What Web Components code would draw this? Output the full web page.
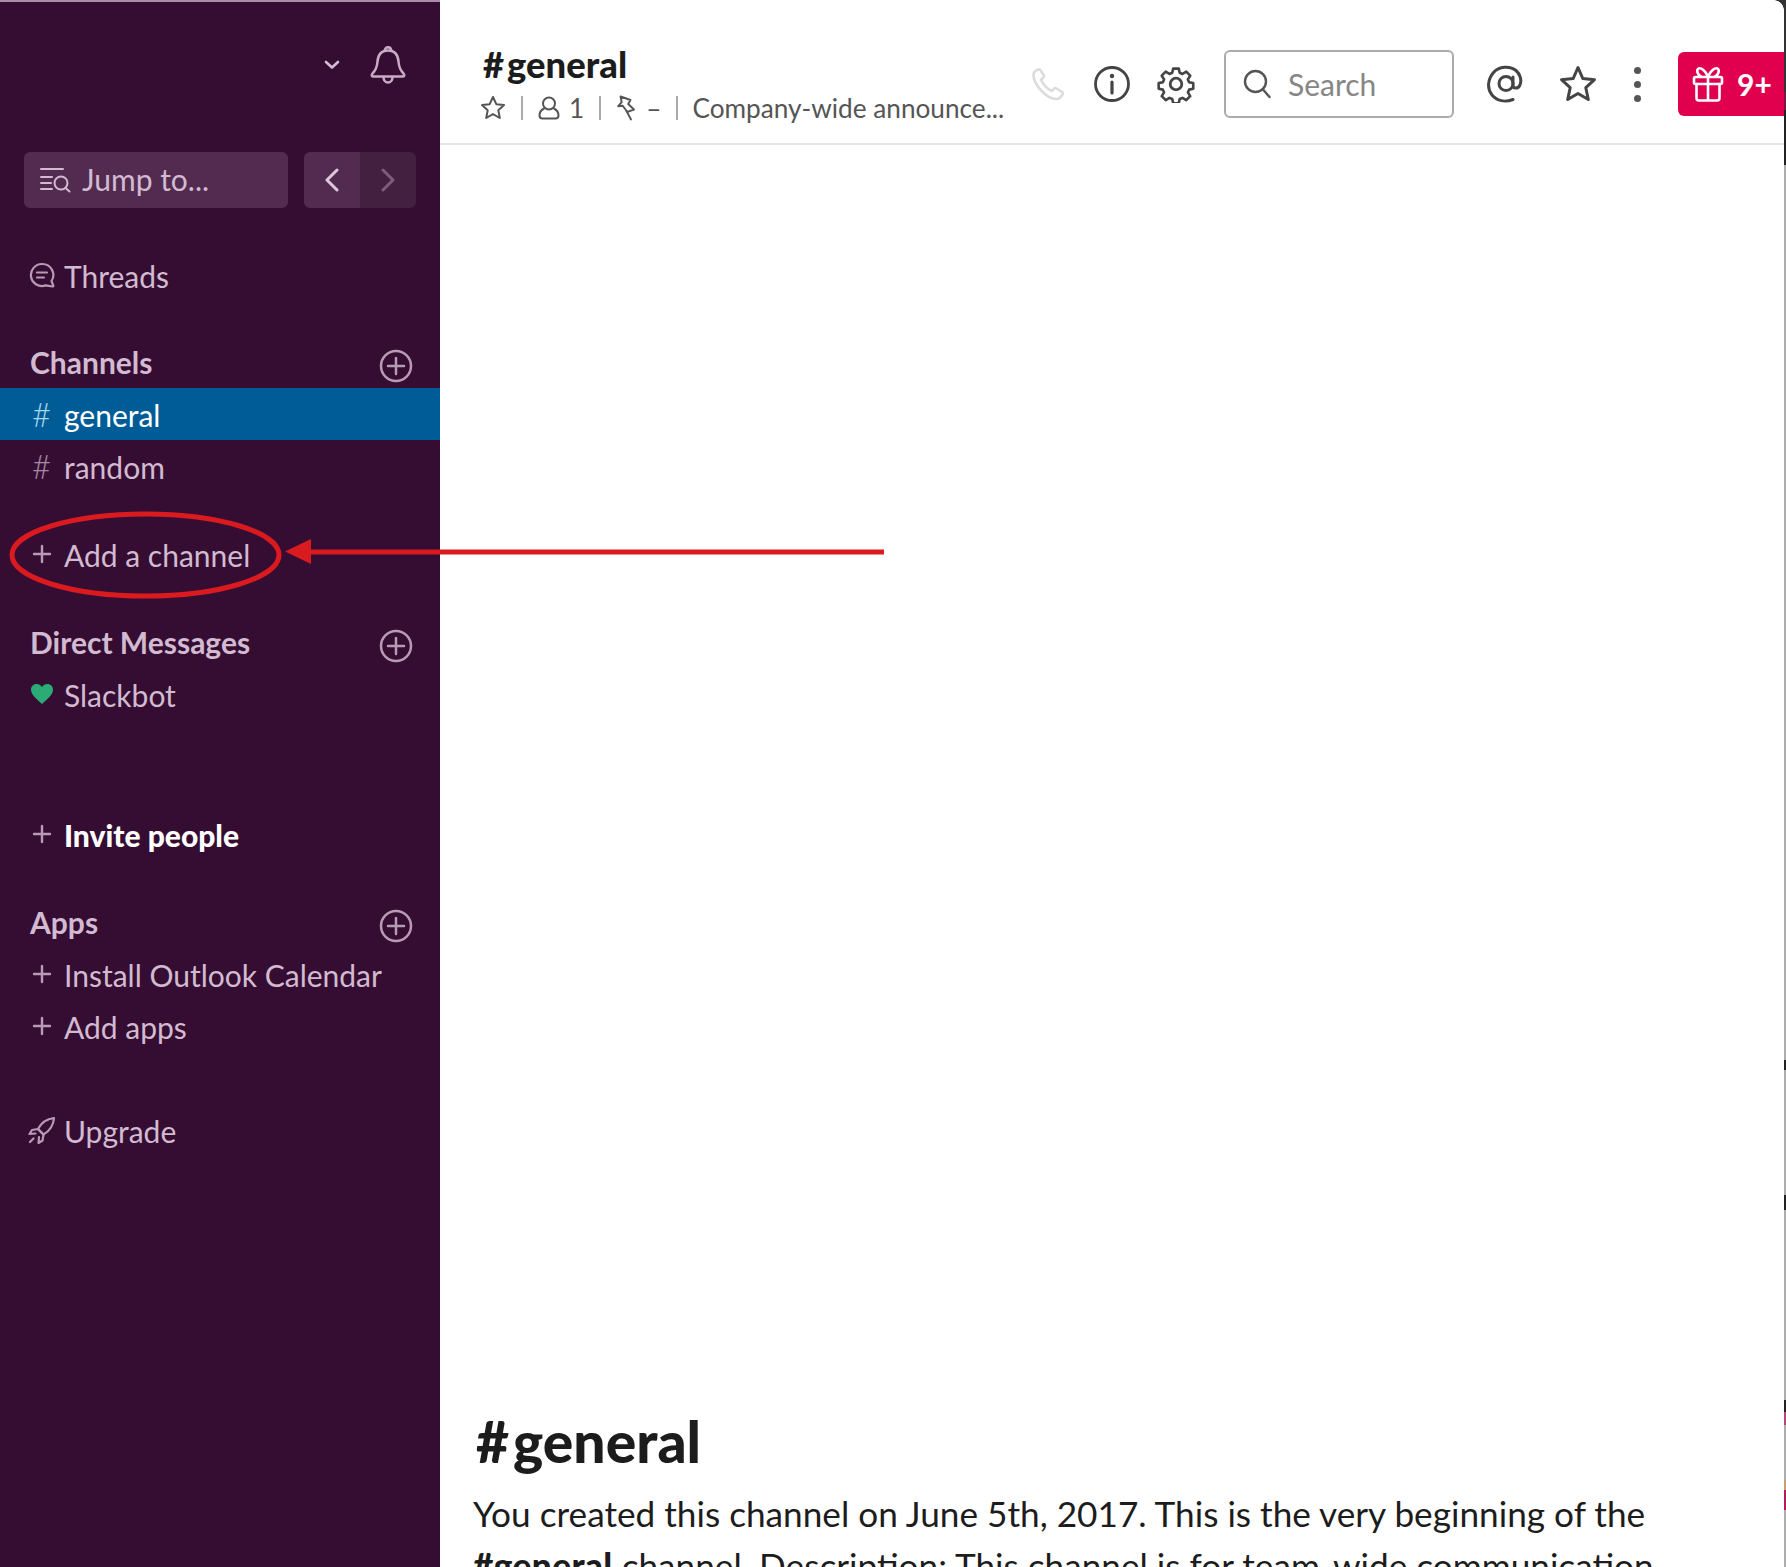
<!DOCTYPE html>
<html lang="en">

<head>
    <meta charset="UTF-8">
    <title>general | Slack</title>
    <style>
        html, body { margin: 0; height: 100%; overflow: hidden; background: #fff; font-family: Lato, "Liberation Sans", sans-serif; }
    </style>
</head>

<body>
    <slack-app>
        <slack-sidebar slot="side">
            <side-top></side-top>
            <jump-bar></jump-bar>
            <side-row icon="threads" style="margin-top:41px">Threads</side-row>
            <side-heading style="margin-top:35px">Channels</side-heading>
            <side-row hash active>general</side-row>
            <side-row hash>random</side-row>
            <side-row icon="plus" style="margin-top:36px">Add a channel</side-row>
            <side-heading style="margin-top:36px">Direct Messages</side-heading>
            <side-row icon="heart">Slackbot</side-row>
            <side-row icon="plus" strong style="margin-top:88px">Invite people</side-row>
            <side-heading style="margin-top:36px">Apps</side-heading>
            <side-row icon="plus">Install Outlook Calendar</side-row>
            <side-row icon="plus">Add apps</side-row>
            <side-row icon="rocket" style="margin-top:52px">Upgrade</side-row>
        </slack-sidebar>
        <channel-header></channel-header>
        <channel-intro name="general">You created this channel on June 5th, 2017. This is the very beginning of the <b>#general</b> channel. Description: This channel is for team-wide communication and announcements.</channel-intro>
        <red-callout slot="over"></red-callout>
    </slack-app>
</body>
<script>
    // all the icons live here, drawn on their own pixel size
    const ICONS = {
        chevron: [16, 10, '<path d="M2 2l6 5.5L14 2" stroke-width="2.6"/>'],
        bell: [38, 38, '<path d="M19 4.5c-6.6 0-10 4.6-10.500 11-.4 5.500-1.500 8.500-5 12-1.600 1.700-.6 3 1 3h29c1.600 0 2.600-1.300 1-3-3.500-3.500-4.600-6.500-5-12-.5-6.400-3.900-11-10.500-11z" stroke-width="2.500"/><path d="M14.500 31c0 3 2 5.500 4.500 5.500s4.500-2.500 4.500-5.500" stroke-width="2.500"/><path d="M15.800 5c0-2.200 1.300-3.800 3.200-3.800s3.200 1.600 3.200 3.800" stroke-width="2.500"/>'],
        jump: [32, 26, '<path d="M1 2h22M1 10h11M1 16h10M1 22h11" stroke-width="2"/><circle cx="21" cy="16" r="6.500" stroke-width="2"/><path d="M25.500 21l4 3.500" stroke-width="2"/>'],
        left: [16, 24, '<path d="M13 2L3 12l10 10" stroke-width="3"/>'],
        right: [16, 24, '<path d="M3 2l10 10L3 22" stroke-width="3"/>'],
        threads: [26, 26, '<path d="M13 2a11 11 0 1 0 3.500 21.400L23.500 24.500c.8 0 1-.5.7-1.200l-1.700-4.300A11 11 0 0 0 13 2z" stroke-width="2.200"/><path d="M8 10.500h10M8 15.500h7" stroke-width="2.200"/>'],
        plus: [20, 20, '<path d="M10 2v16M2 10h16" stroke-width="2.400"/>'],
        circleplus: [34, 34, '<circle cx="17" cy="17" r="15" stroke-width="2.500"/><path d="M17 9v16M9 17h16" stroke-width="2.500"/>'],
        heart: [22, 20, '<path fill="#2bac76" stroke="none" d="M11 20C6 15.500 0 11 0 5.600 0 2.400 2.400 0 5.500 0 7.800 0 9.900 1.200 11 3.200 12.100 1.200 14.200 0 16.500 0 19.600 0 22 2.400 22 5.600 22 11 16 15.500 11 20z"/>'],
        rocket: [28, 28, '<path d="M10 13C13 7 18 3 26 2c-.6 8-4.500 13-10.500 16.500z" stroke-width="2.200"/><path d="M10 13l-6 1-2.500 4 6-.5M15.500 18.500l-1 6-4 2.500.5-6M10.200 13.300l5 5M5.500 22.500l-3.500 3.500" stroke-width="2.200"/>'],
        star: [26, 26, '<path d="M13 2l3.300 7.200 7.700.9-5.700 5.200 1.500 7.700-6.800-3.800-6.800 3.800 1.500-7.700L2 10.100l7.700-.9z" stroke-width="2"/>'],
        person: [22, 24, '<circle cx="11" cy="7.500" r="6" stroke-width="2"/><path d="M6 12.500C3.200 14 1.500 16.500 1.500 19.500c0 1.800 1.200 3 3 3h13c1.800 0 3-1.200 3-3 0-3-1.700-5.500-4.500-7" stroke-width="2"/>'],
        pin: [20, 26, '<path d="M4.500 1.500l10 3.500-2.300 4 5.800 5.500-5.800 2.200-1 0-4.500-6-4.500.5 3.500-4z" stroke-width="1.900"/><path d="M10.500 16l4.500 8.500" stroke-width="1.900"/>'],
        phone: [34, 34, '<path d="M7 2.500c-2 .8-4.500 3-4.500 5.500 0 9 12.500 24 23 24 2.500 0 4.500-2 6-4.500.6-1 .2-2-.6-2.600l-5.400-3.400c-1-.6-2-.4-2.800.4l-2 2.200c-4-1.500-9-7-10.700-11.400l2.200-2c.8-.8 1-1.800.5-2.800L9.500 3.200C9 2.400 8 2 7 2.500z" stroke-width="2.600"/>'],
        info: [38, 38, '<circle cx="19" cy="19" r="16.500" stroke-width="2.800"/><path d="M19 17v11" stroke-width="3.200"/><circle cx="19" cy="11" r="2.200" fill="#444" stroke="none"/>'],
        gear: [38, 38, '<circle cx="19" cy="19" r="5.800" stroke-width="2.800"/><path d="M16 2.500h6l1 4.500 3 1.300 4-2.500 4.300 4.300-2.500 4 1.300 3 4.500 1v6l-4.500 1-1.300 3 2.500 4-4.300 4.300-4-2.500-3 1.300-1 4.500h-6l-1-4.500-3-1.300-4 2.500-4.300-4.300 2.500-4-1.300-3-4.500-1v-6l4.500-1 1.300-3-2.500-4L8 5.800l4 2.500 3-1.300z" stroke-width="2.800" stroke-linejoin="round" transform="translate(1.300 1.300) scale(.93)"/>'],
        search: [28, 30, '<circle cx="12.500" cy="12.500" r="10.500" stroke-width="2.400"/><path d="M20 20.500l6.500 7.500" stroke-width="2.400"/>'],
        at: [38, 38, '<circle cx="19" cy="18.500" r="7" stroke-width="3"/><path d="M26 12v8.500c0 3 4.800 4 7-.5 2-5 0-11-4-14.500C23 .5 12 1 6.500 7.500 1 14-.5 23 5 30c5 6 13 7.500 21 4.500" stroke-width="3"/>'],
        bigstar: [38, 38, '<path d="M19 2.500l4.800 11 11.700 1.200-8.700 8 2.500 11.800L19 28.500 8.700 34.500l2.500-11.800-8.700-8 11.700-1.200z" stroke-width="3"/>'],
        gift: [32, 36, '<rect x="2" y="11" width="28" height="7" rx="1.500" stroke-width="2.600"/><path d="M4.500 18v14c0 1.500 1 2.500 2.500 2.500h18c1.500 0 2.500-1 2.500-2.500V18M16 11v23.500" stroke-width="2.600"/><path d="M16 10.500C13 4 9 1.500 6.500 2.500 4 4 5.500 9 9 10.500M16 10.500C19 4 23 1.500 25.500 2.500 28 4 26.500 9 23 10.500" stroke-width="2.600"/>'],
    }

    function icon(name, color) {
        const [w, h, body] = ICONS[name]
        return `<svg width="${w}" height="${h}" viewBox="0 0 ${w} ${h}" fill="none" stroke="${color}" stroke-width="2" stroke-linecap="round" stroke-linejoin="round" style="display:block;flex:none">${body}</svg>`
    }

    class SlackApp extends HTMLElement {
        constructor() {
            super()
            this.attachShadow({ mode: 'open' })
            this.shadowRoot.innerHTML = `
                <style>
                    :host { display: grid; grid-template-columns: 440px 1fr 2px; grid-template-rows: 145px 1fr; height: 1567px; position: relative; overflow: hidden; }
                    .side { grid-row: 1 / 3; display: block; }
                    .edge { grid-column: 3; grid-row: 1 / 3; background: linear-gradient(#333 0 92px, #7a1845 92px 110px, #222 110px 165px, #adadad 165px 1060px, #222 1060px 1070px, #adadad 1070px 1195px, #222 1195px 1210px, #adadad 1210px 1400px, #222 1400px 1412px, #b04a7a 1412px 1425px, #adadad 1425px 1480px, #c9a06a 1480px 1490px, #b01c5c 1490px 1510px, #adadad 1510px); }
                    .corner { position: absolute; top: 0; right: 2px; width: 10px; height: 10px; background: radial-gradient(circle at 0 100%, transparent 9.500px, #333 10px); }
                </style>
                <div class="side"><slot name="side"></slot></div>
                <slot></slot>
                <div class="edge"></div>
                <div class="corner"></div>
                <slot name="over"></slot>
            `
        }
    }
    customElements.define('slack-app', SlackApp)

    class SlackSidebar extends HTMLElement {
        constructor() {
            super()
            this.attachShadow({ mode: 'open' })
            this.shadowRoot.innerHTML = `
                <style>
                    :host { display: block; height: 100%; box-sizing: border-box; background: #350d33; border-top: 2px solid #a88ca6; color: #d2bbd0; font-family: Lato, "Liberation Sans", sans-serif; }
                </style>
                <slot></slot>
            `
        }
    }
    customElements.define('slack-sidebar', SlackSidebar)

    class SideTop extends HTMLElement {
        constructor() {
            super()
            this.attachShadow({ mode: 'open' })
            this.shadowRoot.innerHTML = `
                <style>
                    :host { display: flex; align-items: center; justify-content: flex-end; height: 150px; box-sizing: border-box; padding: 0 33px 24px 0; gap: 29px; }
                </style>
                ${icon('chevron', '#d4bdd2')}
                ${icon('bell', '#c9abc6')}
            `
        }
    }
    customElements.define('side-top', SideTop)

    class JumpBar extends HTMLElement {
        constructor() {
            super()
            this.attachShadow({ mode: 'open' })
            this.shadowRoot.innerHTML = `
                <style>
                    :host { display: flex; gap: 16px; padding: 0 24px; height: 56px; }
                    .jump { width: 264px; display: flex; align-items: center; gap: 10px; padding-left: 16px; box-sizing: border-box; background: #532b51; border-radius: 6px; font-size: 30px; color: #d2bbd0; }
                    .jump span { margin-top: -2px; }
                    .nav { display: flex; width: 112px; border-radius: 6px; overflow: hidden; }
                    .nav div { flex: 1; display: flex; align-items: center; justify-content: center; }
                    .back { background: #532b51; }
                    .fwd { background: #43203f; }
                </style>
                <div class="jump">${icon('jump', '#d2bbd0')}<span>Jump to...</span></div>
                <div class="nav">
                    <div class="back">${icon('left', '#dcc8da')}</div>
                    <div class="fwd">${icon('right', '#7d5c7b')}</div>
                </div>
            `
        }
    }
    customElements.define('jump-bar', JumpBar)

    class SideRow extends HTMLElement {
        constructor() {
            super()
            this.attachShadow({ mode: 'open' })
            const name = this.getAttribute('icon')
            const glyph = this.hasAttribute('hash') ? '<span class="hash">#</span>' : (name ? icon(name, '#b79bb4') : '')
            this.shadowRoot.innerHTML = `
                <style>
                    :host { display: flex; align-items: center; height: 52px; font-size: 30px; color: #d2bbd0; }
                    :host([active]) { background: #005c96; color: #fff; }
                    :host([strong]) { color: #fff; font-weight: 900; }
                    .ic { width: 64px; flex: none; display: flex; justify-content: center; box-sizing: border-box; padding-left: 19px; }
                    .hash { font-size: 33px; font-weight: 300; color: #a68ba4; line-height: 1; }
                    :host([active]) .hash { color: #a6d5ee; }
                    .txt { margin-top: 2px; }
                </style>
                <div class="ic">${glyph}</div>
                <span class="txt"><slot></slot></span>
            `
        }
    }
    customElements.define('side-row', SideRow)

    class SideHeading extends HTMLElement {
        constructor() {
            super()
            this.attachShadow({ mode: 'open' })
            this.shadowRoot.innerHTML = `
                <style>
                    :host { display: flex; align-items: center; justify-content: space-between; height: 52px; padding: 0 27px 0 30px; font-size: 30px; font-weight: 700; color: #d2bbd0; }
                    svg { margin-top: 7px; }
                </style>
                <span><slot></slot></span>
                ${icon('circleplus', '#b79bb4')}
            `
        }
    }
    customElements.define('side-heading', SideHeading)

    class ChannelHeader extends HTMLElement {
        constructor() {
            super()
            this.attachShadow({ mode: 'open' })
            this.shadowRoot.innerHTML = `
                <style>
                    :host { display: flex; align-items: center; height: 145px; box-sizing: border-box; border-bottom: 2px solid #e4e4e4; padding: 23px 0 0 42px; color: #1d1c1d; font-family: Lato, "Liberation Sans", sans-serif; }
                    .info { width: 549px; flex: none; margin-top: -1px; }
                    h2 { margin: 0 0 8px 1px; height: 42px; line-height: 42px; font-size: 36.400px; font-weight: 900; }
                    h2 span { margin-right: 3px; }
                    .meta { display: flex; align-items: center; height: 30px; font-size: 26.200px; color: #555; white-space: nowrap; }
                    .meta > svg:first-child { margin-left: -2px; }
                    .sep { width: 2px; height: 24px; background: #aaa; margin: 0 15px; flex: none; }
                    .sep.c { margin-right: 14px; }
                    .tools { display: flex; align-items: center; margin-top: 2px; }
                    .search { display: flex; align-items: center; gap: 17px; width: 230px; height: 68px; box-sizing: border-box; margin: 0 33px 0 29px; padding-left: 17px; border: 2px solid #aaa; border-radius: 6px; font-size: 30px; color: #868686; }
                    .dots { display: flex; flex-direction: column; gap: 7px; margin: 0 37px; }
                    .dots i { width: 7px; height: 7px; border-radius: 50%; background: #555; display: block; }
                    .gift { display: flex; align-items: center; gap: 13px; width: 106px; height: 64px; box-sizing: border-box; padding-left: 14px; background: #e0004d; border-radius: 6px 0 0 6px; color: #fff; font-size: 30px; font-weight: 700; }
                </style>
                <div class="info">
                    <h2><span>#</span>general</h2>
                    <div class="meta">
                        ${icon('star', '#555')}<span class="sep"></span>
                        ${icon('person', '#555')}<span style="margin-left:9px">1</span><span class="sep"></span>
                        ${icon('pin', '#555')}<span style="margin-left:10px">–</span><span class="sep c"></span>
                        <span>Company-wide announce...</span>
                    </div>
                </div>
                <div class="tools">
                    ${icon('phone', '#dcdcdc')}
                    <span style="width:28px"></span>
                    ${icon('info', '#444')}
                    <span style="width:26px"></span>
                    ${icon('gear', '#444')}
                    <div class="search">${icon('search', '#555')}<span>Search</span></div>
                    ${icon('at', '#444')}
                    <span style="width:34px"></span>
                    ${icon('bigstar', '#444')}
                    <div class="dots"><i></i><i></i><i></i></div>
                    <div class="gift">${icon('gift', '#fff')}<span>9+</span></div>
                </div>
            `
        }
    }
    customElements.define('channel-header', ChannelHeader)

    class ChannelIntro extends HTMLElement {
        constructor() {
            super()
            this.attachShadow({ mode: 'open' })
            this.shadowRoot.innerHTML = `
                <style>
                    :host { display: block; padding: 1266px 0 0 33px; grid-column: 2; box-sizing: border-box; width: 1344px; font-family: Lato, "Liberation Sans", sans-serif; color: #1d1c1d; }
                    h1 { margin: 0 0 0 3px; height: 60px; line-height: 60px; font-size: 57px; font-weight: 900; }
                    h1 span { margin-right: 4px; }
                    p { margin: 16px 0 0; width: 1210px; font-size: 35.200px; line-height: 52px; }
                    ::slotted(b) { font-weight: 900; letter-spacing: .4px; }
                </style>
                <h1><span>#</span>${this.getAttribute('name')}</h1>
                <p><slot></slot></p>
            `
        }
    }
    customElements.define('channel-intro', ChannelIntro)

    // the red mark around "Add a channel" sits over the page, so it is the one free-placed thing
    class RedCallout extends HTMLElement {
        constructor() {
            super()
            this.attachShadow({ mode: 'open' })
            this.shadowRoot.innerHTML = `
                <style>
                    :host { position: absolute; left: 0; top: 500px; display: block; pointer-events: none; }
                    svg { display: block; }
                </style>
                <svg width="900" height="110" viewBox="0 0 900 110">
                    <ellipse cx="145.500" cy="55" rx="133.500" ry="41" fill="none" stroke="#d91a1f" stroke-width="5"/>
                    <path d="M285 51.500L311 39V49.500H884V54.500H311V64z" fill="#d91a1f"/>
                </svg>
            `
        }
    }
    customElements.define('red-callout', RedCallout)
</script>

</html>
